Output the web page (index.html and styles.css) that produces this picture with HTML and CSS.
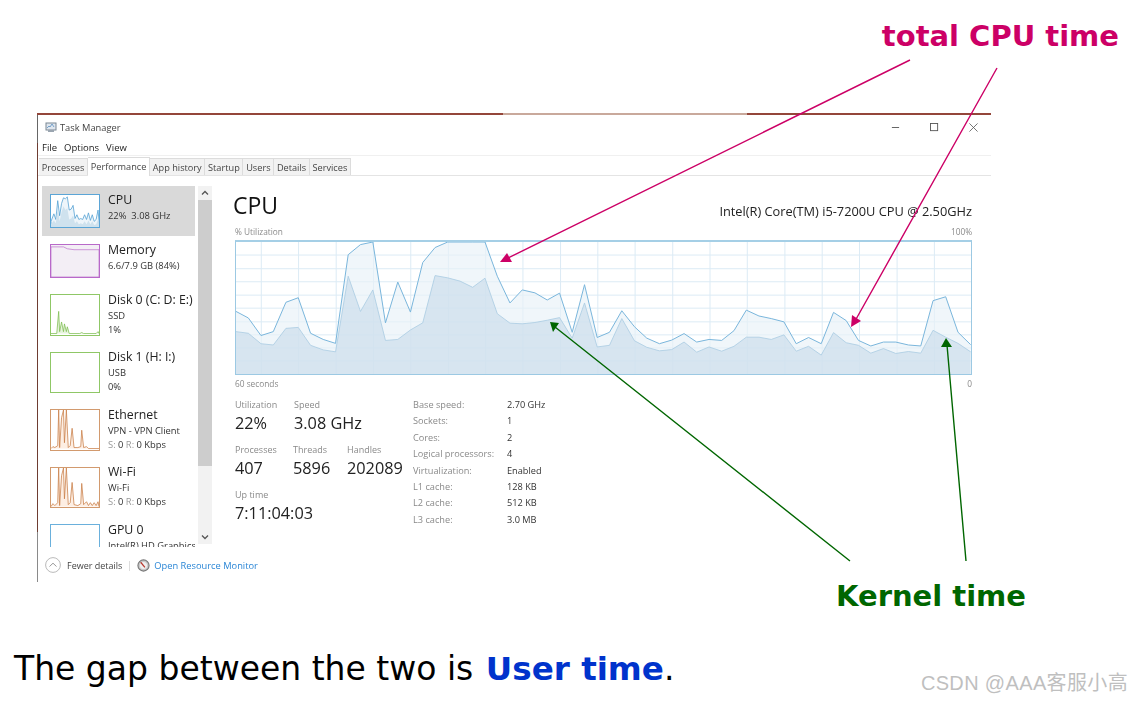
FILE: index.html
```html
<!DOCTYPE html>
<html lang="en">
<head>
<meta charset="utf-8">
<title>CPU time</title>
<link rel="stylesheet" href="styles.css">
</head>
<body>
<div class="slide">
  <header class="slide-head"><span class="total-label">total CPU time</span></header>

  <section class="window">
    <div class="titlebar">
      <svg class="app-icon" viewBox="0 0 12 12"><rect x="1" y="2" width="10" height="7" fill="#dfe6ee" stroke="#7b8794" stroke-width="1"/><path d="M2 7l2-2 1 1 2-3 2 3" fill="none" stroke="#5b8fc0" stroke-width=".8"/><rect x="3" y="9" width="6" height="2" fill="#9aa5b0"/></svg>
      <span class="app-title">Task Manager</span>
      <div class="win-controls">
        <svg class="ctl" viewBox="0 0 10 10"><path d="M1 5h8" stroke="#555" stroke-width="1"/></svg>
        <svg class="ctl" viewBox="0 0 10 10"><rect x=".5" y=".5" width="8" height="8" fill="none" stroke="#555" stroke-width="1"/></svg>
        <svg class="ctl" viewBox="0 0 10 10"><path d="M.5.5l9 9M9.5.5l-9 9" stroke="#555" stroke-width=".9"/></svg>
      </div>
    </div>
    <nav class="menubar"><span>File</span><span>Options</span><span>View</span></nav>
    <nav class="tabs">
      <span class="tab">Processes</span>
      <span class="tab active">Performance</span>
      <span class="tab">App history</span>
      <span class="tab">Startup</span>
      <span class="tab">Users</span>
      <span class="tab">Details</span>
      <span class="tab">Services</span>
    </nav>

    <div class="body">
      <aside class="side">
        <div class="side-list">
          <div class="item selected">
            <svg class="thumb short cpu" viewBox="0 0 50 34" preserveAspectRatio="none">
              <path d="M0 28 3 20 5 26 7 6 9 22 11 9 13 3 15 4 17 2 19 16 21 15 23 11 25 25 27 21 29 26 31 25 33 26 35 21 37 26 39 19 41 27 43 21 45 28 47 26 49 16 50 27V34H0Z" fill="#eef5fa" stroke="#4f9fd2" stroke-width=".8"/>
              <path d="M0 31 3 27 5 30 7 14 9 28 11 18 13 12 15 16 17 14 19 26 21 25 23 22 25 30 27 28 29 31 31 30 33 31 35 28 37 31 39 27 41 31 43 28 45 32 47 31 49 26 50 31V34H0Z" fill="#cfe2ee"/>
            </svg>
            <div class="item-text"><div class="name">CPU</div><div class="sub">22%&nbsp; 3.08 GHz</div></div>
          </div>
          <div class="item">
            <svg class="thumb short mem" viewBox="0 0 50 34" preserveAspectRatio="none">
              <path d="M0 2H13L17 4 24 5H50V34H0Z" fill="#f3eef5" stroke="#b869c9" stroke-width=".7"/>
            </svg>
            <div class="item-text"><div class="name">Memory</div><div class="sub">6.6/7.9 GB (84%)</div></div>
          </div>
          <div class="item">
            <svg class="thumb disk" viewBox="0 0 50 41" preserveAspectRatio="none">
              <path d="M0 40H6L8 17 9 38 11 28 13 38 14 30 16 38 17 33 19 40H30L32 39 34 40H47L49 38 50 40" fill="#e6f3dc" stroke="#7fbe52" stroke-width=".8"/>
            </svg>
            <div class="item-text"><div class="name">Disk 0 (C: D: E:)</div><div class="sub">SSD</div><div class="sub">1%</div></div>
          </div>
          <div class="item">
            <svg class="thumb disk" viewBox="0 0 50 41" preserveAspectRatio="none"></svg>
            <div class="item-text"><div class="name">Disk 1 (H: I:)</div><div class="sub">USB</div><div class="sub">0%</div></div>
          </div>
          <div class="item">
            <svg class="thumb net" viewBox="0 0 50 41" preserveAspectRatio="none">
              <path d="M0 40 2 38 4 39 7 37 8 0 9 39 11 8 13 0 14 34 16 0 18 39 20 37 22 19 24 39 28 39 31 38 32 21 34 39 37 38 39 40H50" fill="#fdeee3" stroke="#c97f48" stroke-width=".8"/>
            </svg>
            <div class="item-text"><div class="name">Ethernet</div><div class="sub">VPN - VPN Client</div><div class="sub"><span class="mute">S:</span> 0 <span class="mute">R:</span> 0 Kbps</div></div>
          </div>
          <div class="item">
            <svg class="thumb net" viewBox="0 0 50 41" preserveAspectRatio="none">
              <path d="M0 40 2 37 4 39 7 36 8 0 9 39 11 8 13 0 14 32 16 0 18 38 20 36 22 15 24 38 28 39 31 37 32 16 34 38 37 35 39 39 41 36 43 39 45 36 47 39 49 35 50 40" fill="#fdeee3" stroke="#c97f48" stroke-width=".8"/>
            </svg>
            <div class="item-text"><div class="name">Wi-Fi</div><div class="sub">Wi-Fi</div><div class="sub"><span class="mute">S:</span> 0 <span class="mute">R:</span> 0 Kbps</div></div>
          </div>
          <div class="item">
            <svg class="thumb gpu" viewBox="0 0 50 41" preserveAspectRatio="none"></svg>
            <div class="item-text"><div class="name">GPU 0</div><div class="sub">Intel(R) HD Graphics</div></div>
          </div>
        </div>
        <div class="scroll">
          <svg class="scroll-btn" viewBox="0 0 14 14"><path d="M4 8.5 7 5.5 10 8.5" fill="none" stroke="#555" stroke-width="1.3"/></svg>
          <div class="scroll-track"><div class="scroll-thumb"></div></div>
          <svg class="scroll-btn" viewBox="0 0 14 14"><path d="M4 5.5 7 8.5 10 5.5" fill="none" stroke="#555" stroke-width="1.3"/></svg>
        </div>
      </aside>

      <main class="main">
        <div class="main-head"><h1>CPU</h1><span class="model">Intel(R) Core(TM) i5-7200U CPU @ 2.50GHz</span></div>
        <div class="axis axis-top"><span>% Utilization</span><span>100%</span></div>
        <svg class="chart" viewBox="0 0 2208 405" preserveAspectRatio="none">
          <g class="grid">
            <path d="M0 40H2208M0 82H2208M0 122H2208M0 163H2208M0 203H2208M0 245H2208M0 285H2208M0 325H2208M0 365H2208"/>
            <path d="M76 0V405M188 0V405M301 0V405M413 0V405M525 0V405M638 0V405M750 0V405M862 0V405M975 0V405M1087 0V405M1199 0V405M1312 0V405M1424 0V405M1536 0V405M1649 0V405M1761 0V405M1873 0V405M1986 0V405M2098 0V405"/>
          </g>
          <polygon class="area-total" points="0,405 0,213 37,233 75,287 112,275 150,185 187,171 224,280 262,299 299,311 337,39 374,8 411,0 449,248 486,123 524,215 561,63 598,17 636,0 673,0 711,0 748,0 785,105 823,187 860,147 898,156 935,178 972,157 1010,277 1047,131 1085,293 1122,277 1159,211 1197,260 1234,295 1272,312 1309,301 1346,281 1384,307 1421,299 1459,302 1496,272 1533,209 1571,227 1608,235 1646,245 1683,312 1720,293 1758,312 1795,216 1833,241 1870,302 1907,319 1945,307 1982,307 2020,316 2057,319 2094,180 2132,168 2169,277 2207,315 2207,405"/>
          <polygon class="area-kernel" points="0,405 0,275 37,280 75,312 112,316 150,265 187,262 224,317 262,331 299,337 337,105 374,213 411,147 449,302 486,299 524,270 561,248 598,103 636,110 673,120 711,139 748,111 785,220 823,249 860,251 898,247 935,240 972,232 1010,295 1047,187 1085,322 1122,317 1159,235 1197,303 1234,323 1272,334 1309,330 1346,307 1384,338 1421,322 1459,335 1496,320 1533,292 1571,292 1608,299 1646,285 1683,335 1720,320 1758,347 1795,278 1833,309 1870,317 1907,341 1945,327 1982,342 2020,336 2057,341 2094,271 2132,292 2169,311 2207,337 2207,405"/>
          <polyline class="line-kernel" points="0,275 37,280 75,312 112,316 150,265 187,262 224,317 262,331 299,337 337,105 374,213 411,147 449,302 486,299 524,270 561,248 598,103 636,110 673,120 711,139 748,111 785,220 823,249 860,251 898,247 935,240 972,232 1010,295 1047,187 1085,322 1122,317 1159,235 1197,303 1234,323 1272,334 1309,330 1346,307 1384,338 1421,322 1459,335 1496,320 1533,292 1571,292 1608,299 1646,285 1683,335 1720,320 1758,347 1795,278 1833,309 1870,317 1907,341 1945,327 1982,342 2020,336 2057,341 2094,271 2132,292 2169,311 2207,337"/>
          <polyline class="line-total" points="0,213 37,233 75,287 112,275 150,185 187,171 224,280 262,299 299,311 337,39 374,8 411,0 449,248 486,123 524,215 561,63 598,17 636,0 673,0 711,0 748,0 785,105 823,187 860,147 898,156 935,178 972,157 1010,277 1047,131 1085,293 1122,277 1159,211 1197,260 1234,295 1272,312 1309,301 1346,281 1384,307 1421,299 1459,302 1496,272 1533,209 1571,227 1608,235 1646,245 1683,312 1720,293 1758,312 1795,216 1833,241 1870,302 1907,319 1945,307 1982,307 2020,316 2057,319 2094,180 2132,168 2169,277 2207,315"/>
        </svg>
        <div class="axis axis-bottom"><span>60 seconds</span><span>0</span></div>

        <div class="stats">
          <div class="stats-left">
            <div class="stat-row">
              <div class="stat w59"><div class="label">Utilization</div><div class="value">22%</div></div>
              <div class="stat"><div class="label">Speed</div><div class="value">3.08 GHz</div></div>
            </div>
            <div class="stat-row">
              <div class="stat w58"><div class="label">Processes</div><div class="value">407</div></div>
              <div class="stat w54"><div class="label">Threads</div><div class="value">5896</div></div>
              <div class="stat"><div class="label">Handles</div><div class="value">202089</div></div>
            </div>
            <div class="stat-row">
              <div class="stat"><div class="label">Up time</div><div class="value">7:11:04:03</div></div>
            </div>
          </div>
          <dl class="specs">
            <dt>Base speed:</dt><dd>2.70 GHz</dd>
            <dt>Sockets:</dt><dd>1</dd>
            <dt>Cores:</dt><dd>2</dd>
            <dt>Logical processors:</dt><dd>4</dd>
            <dt>Virtualization:</dt><dd>Enabled</dd>
            <dt>L1 cache:</dt><dd>128 KB</dd>
            <dt>L2 cache:</dt><dd>512 KB</dd>
            <dt>L3 cache:</dt><dd>3.0 MB</dd>
          </dl>
        </div>
      </main>
    </div>

    <footer class="win-foot">
      <svg class="fewer" viewBox="0 0 16 16"><circle cx="8" cy="8" r="7.4" fill="#fff" stroke="#a8a8a8" stroke-width=".8"/><path d="M4.5 9.5 8 6.2 11.5 9.5" fill="none" stroke="#9a9a9a" stroke-width="1"/></svg>
      <span class="fewer-text">Fewer details</span>
      <span class="sep"></span>
      <svg class="monitor" viewBox="0 0 14 14"><circle cx="7" cy="7" r="6" fill="#c9c9c9" stroke="#777" stroke-width="1.2"/><circle cx="7" cy="7" r="3.8" fill="#efefef"/><path d="M4 3.5 8.5 9" stroke="#b8372c" stroke-width="1.3"/></svg>
      <span class="link">Open Resource Monitor</span>
    </footer>
  </section>

  <div class="kernel-row"><span class="kernel-label">Kernel time</span></div>
  <div class="slide-foot">
    <p class="gap-text">The gap between the two is <b class="user">User time</b>.</p>
    <span class="mark">CSDN @AAA客服小高</span>
  </div>

  <svg class="arrows" viewBox="0 0 1132 702">
    <g class="pink">
      <path d="M910 60 506 259M997 68 855 321"/>
      <polygon points="500,262 507,253 512,262"/>
      <polygon points="851,327 852,315 861,321"/>
    </g>
    <g class="green">
      <path d="M850 561 555 327M966 561 947 345"/>
      <polygon points="550,322 559,323 553,332"/>
      <polygon points="946,338 941,347 952,347"/>
    </g>
  </svg>
</div>
</body>
</html>
```

FILE: styles.css
```css
* { box-sizing: border-box; }
html, body { margin: 0; padding: 0; background: #fff; }
body { overflow: hidden; }

.slide {
  position: relative;
  width: 1132px;
  height: 702px;
  font-family: "DejaVu Sans", sans-serif;
  color: #000;
}

.slide-head {
  height: 113px;
  display: flex;
  justify-content: flex-end;
  align-items: flex-start;
  padding: 16px 13px 0 0;
}
.total-label {
  font-size: 29px;
  line-height: 40px;
  font-weight: 700;
  color: #cc0066;
}

.window {
  width: 954px;
  height: 469px;
  margin-left: 37px;
  padding: 2px 0 0 1px;
  display: flex;
  flex-direction: column;
  background:
    linear-gradient(90deg, #94463a 0 466px, #c9a99c 466px 710px, #94463a 710px) left top / 100% 2px no-repeat,
    linear-gradient(180deg, #666 0 30px, #6e3d32 30px 419px, #8a8a8a 419px) left top / 1px 100% no-repeat,
    #fff;
  font-family: "Open Sans", "Noto Sans", sans-serif;
  color: #222;
  filter: blur(0.3px);
}

.titlebar {
  height: 24px;
  display: flex;
  align-items: center;
  padding-left: 7px;
  flex: none;
}
.app-icon { width: 12px; height: 12px; }
.app-title { font-size: 9.3px; margin-left: 3px; color: #444; }
.win-controls { margin-left: auto; display: flex; gap: 30px; padding-right: 13px; }
.ctl { width: 9px; height: 9px; }

.menubar {
  height: 17px;
  display: flex;
  align-items: center;
  gap: 7px;
  padding-left: 4px;
  font-size: 9.5px;
  border-bottom: 1px solid #f0f0f0;
  flex: none;
}

.tabs {
  height: 20px;
  display: flex;
  align-items: flex-end;
  padding-left: 1px;
  border-bottom: 1px solid #e4e4e4;
  flex: none;
}
.tab {
  height: 17px;
  padding: 0 2.7px;
  font-size: 9.2px;
  line-height: 17px;
  color: #444;
  background: #f2f2f2;
  border: 1px solid #dcdcdc;
  border-bottom: 0;
  border-left: 0;
  white-space: nowrap;
}
.tab.active {
  height: 19px;
  line-height: 17px;
  background: #fff;
  margin-bottom: -1px;
}

.body { flex: 1; display: flex; min-height: 0; }

.side {
  width: 175px;
  padding: 10px 0 0 4px;
  display: flex;
  flex: none;
  height: 380px;
}
.side-list { width: 153px; overflow: hidden; height: 361px; flex: none; }
.item {
  display: flex;
  gap: 8px;
  padding: 8px;
  overflow: hidden;
  white-space: nowrap;
}
.item.selected { background: #d9d9d9; }
.thumb {
  width: 50px;
  height: 41.5px;
  flex: none;
  border: 1px solid;
  background: #fff;
}
.thumb.short { height: 34px; }
.thumb.cpu { border-color: #5ba5d6; }
.thumb.mem { border-color: #b869c9; background: #f3eef5; }
.thumb.disk { border-color: #8fc766; }
.thumb.net { border-color: #d29a6e; }
.thumb.gpu { border-color: #6ab0dc; }

.item-text { margin: -3.5px 0 -4px; }
.name { font-size: 12.3px; line-height: 18px; color: #222; }
.sub { font-size: 9.4px; line-height: 14px; color: #333; }
.mute { color: #999; }

.scroll {
  width: 14px;
  margin-left: 3px;
  display: flex;
  flex-direction: column;
  height: 358px;
  background: #f2f2f2;
  flex: none;
}
.scroll-btn { width: 14px; height: 14px; flex: none; }
.scroll-track { flex: 1; }
.scroll-thumb { height: 266px; background: #cdcdcd; }

.main {
  flex: 1;
  padding: 0 19px 0 22px;
  min-width: 0;
}
.main-head {
  height: 49px;
  display: flex;
  justify-content: space-between;
  align-items: flex-end;
  padding-bottom: 5px;
}
.main-head h1 {
  margin: 0 0 0 -2px;
  font-size: 23px;
  line-height: 30px;
  font-weight: 400;
  color: #111;
}
.model { font-size: 12.8px; line-height: 18px; color: #222; }

.axis {
  display: flex;
  justify-content: space-between;
  font-size: 8.3px;
  color: #8a8a8a;
}
.axis-top { height: 15px; line-height: 14px; }
.axis-bottom { height: 16px; line-height: 17px; }

.chart {
  display: block;
  width: 737px;
  height: 135px;
  border: 1px solid #9cc9e3;
  border-top: 2px solid #a5cfe6;
  background: #fff;
  overflow: hidden;
}
.grid path { fill: none; stroke: #dcebf5; stroke-width: 1; vector-effect: non-scaling-stroke; }
.area-total { fill: #e8f1f8; fill-opacity: .65; }
.area-kernel { fill: #c9dceb; fill-opacity: .65; }
.line-total { fill: none; stroke: #7ab6dc; stroke-width: 1; vector-effect: non-scaling-stroke; }
.line-kernel { fill: none; stroke: #a9cbe2; stroke-width: .8; vector-effect: non-scaling-stroke; }

.stats { display: flex; padding-top: 7px; }
.stats-left { width: 178px; flex: none; }
.stat-row { display: flex; height: 45px; }
.stat { flex: none; }
.w59 { width: 59px; }
.w58 { width: 58px; }
.w54 { width: 54px; }
.label { font-size: 9px; line-height: 13px; color: #8a8a8a; }
.value { font-size: 16.3px; line-height: 24px; color: #222; }

.specs {
  margin: 0;
  display: grid;
  grid-template-columns: 94px auto;
  grid-auto-rows: 16.4px;
  font-size: 9.2px;
  line-height: 13px;
}
.specs dt { color: #8a8a8a; }
.specs dd { margin: 0; color: #333; }

.win-foot {
  height: 27px;
  margin-top: auto;
  display: flex;
  align-items: center;
  padding: 0 0 8px 7px;
  flex: none;
  font-size: 9px;
}
.fewer { width: 16px; height: 16px; }
.fewer-text { margin: 2px 0 0 6px; color: #444; }
.sep { width: 1px; height: 10px; background: #ddd; margin: 2px 7px 0; }
.monitor { width: 13px; height: 13px; margin-top: 1px; }
.link { margin: 2px 0 0 4px; font-size: 9.3px; color: #2a86d6; }

.kernel-row { padding-left: 836px; height: 28px; }
.kernel-label {
  font-size: 29px;
  line-height: 28px;
  font-weight: 700;
  color: #006600;
}

.slide-foot {
  height: 92px;
  display: flex;
  justify-content: space-between;
  padding: 0 4px 0 14px;
}
.gap-text { margin: 39px 0 0; font-size: 33px; line-height: 40px; }
.user { color: #0033cc; font-size: 32.6px; margin-left: 2px; }
.mark {
  align-self: flex-start;
  margin-top: 61px;
  font-family: "Liberation Sans", "Noto Sans CJK SC", sans-serif;
  font-size: 20px;
  line-height: 24px;
  color: #bfbfbf;
  letter-spacing: .35px;
  white-space: nowrap;
}

.arrows {
  position: absolute;
  left: 0;
  top: 0;
  width: 1132px;
  height: 702px;
  pointer-events: none;
}
.pink path { fill: none; stroke: #cc0066; stroke-width: 1.4; }
.pink polygon { fill: #cc0066; }
.green path { fill: none; stroke: #006600; stroke-width: 1.4; }
.green polygon { fill: #006600; }
```
